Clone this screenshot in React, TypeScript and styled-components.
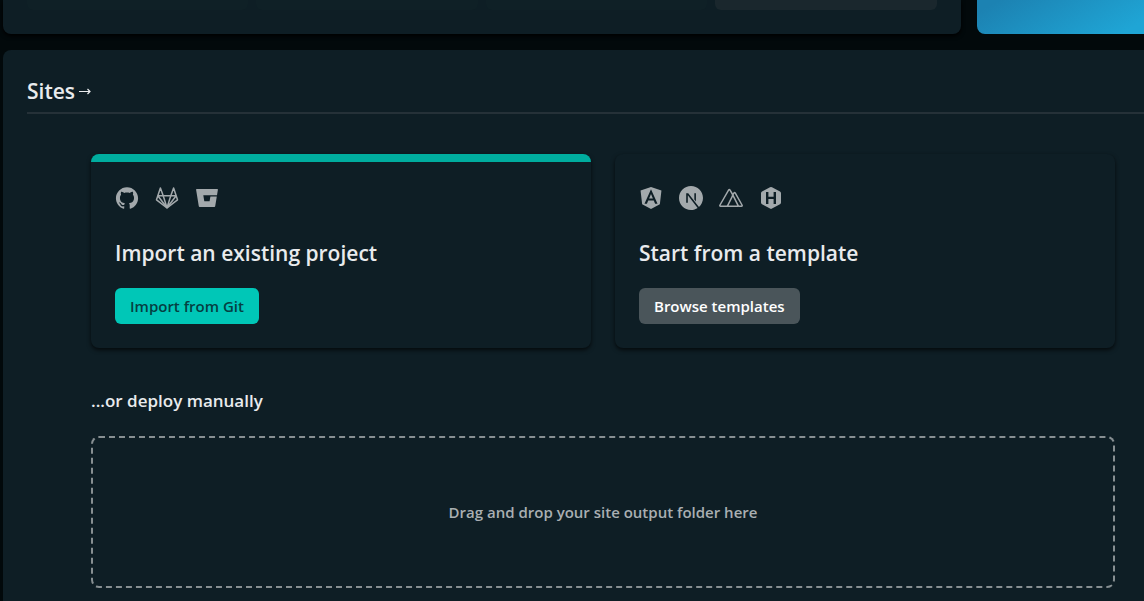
import React from "react";
import styled, { createGlobalStyle } from "styled-components";
import { SiGithub, SiNextdotjs } from "react-icons/si";

const GlobalStyle = createGlobalStyle`
  * { box-sizing: border-box; }
  body {
    margin: 0;
    background: #02090b;
    color: #e9ebed;
    font-family: "Open Sans", "Noto Sans", sans-serif;
    font-size: 15px;
    line-height: 24px;
  }
  h2, h3, h4, p { margin: 0; }
  button { font: inherit; cursor: pointer; }
`;

const Page = styled.main`
  display: flex;
  flex-direction: column;
  gap: 16px;
  padding-left: 3px;
  overflow: hidden;
`;

const TopRow = styled.div`
  display: flex;
  gap: 16px;
`;

const UsagePanel = styled.section`
  flex: 1;
  display: grid;
  grid-template-columns: repeat(3, 1fr) 222px;
  gap: 8px;
  padding: 0 24px 24px;
  border-radius: 0 0 8px 8px;
  background: #0e1e25;
  box-shadow: 0 2px 4px #000000;
`;

const Usage = styled.div<{ $strong?: boolean }>`
  height: 10px;
  border-radius: 0 0 6px 6px;
  background: ${(p) => (p.$strong ? "#1a272d" : "#0f2026")};
`;

const Promo = styled.aside`
  flex: 0 0 167px;
  border-radius: 0 0 0 8px;
  background: linear-gradient(150deg, #1c82b2 10%, #1fa5d5 90%);
`;

const Panel = styled.section`
  padding: 25px 0 13px 24px;
  border-radius: 8px 0 0 0;
  background: #0e1e25;
`;

const PanelHeader = styled.header`
  padding: 0 0 5px;
  border-bottom: 2px solid #253138;
`;

const Title = styled.h2`
  font-size: 21px;
  line-height: 32px;
  font-weight: 600;
`;

const TitleLink = styled.a`
  display: inline-flex;
  align-items: center;
  gap: 4px;
  color: inherit;
  text-decoration: none;
`;

const Content = styled.div`
  max-width: 1024px;
  margin: 40px 29px 0 64px;
`;

const Cards = styled.div`
  display: grid;
  grid-template-columns: 1fr 1fr;
  gap: 24px;
`;

const Card = styled.article<{ $accent?: boolean }>`
  padding: 24px;
  border-top: 8px solid ${(p) => (p.$accent ? "#00ad9f" : "transparent")};
  border-radius: 8px;
  background-color: #0e1e25;
  box-shadow: 0 2px 4px rgba(0, 0, 0, 0.7);
`;

const Logos = styled.div`
  display: flex;
  gap: 16px;
  height: 24px;
  color: #a3a9ac;
`;

const CardTitle = styled.h3`
  margin: 27px 0 19px;
  font-size: 21px;
  line-height: 32px;
  font-weight: 600;
`;

const Button = styled.button<{ $primary?: boolean }>`
  height: 36px;
  padding: 0 15px;
  border: 0;
  border-radius: 6px;
  font-weight: 600;
  background: ${(p) => (p.$primary ? "#00c7b7" : "#4a555a")};
  color: ${(p) => (p.$primary ? "#053f42" : "#ffffff")};
`;

const ManualTitle = styled.h4`
  margin: 41px 0 23px;
  font-size: 17px;
  line-height: 24px;
  font-weight: 600;
`;

const DropZone = styled.div`
  display: flex;
  align-items: center;
  justify-content: center;
  height: 152px;
  border: 2px dashed #878f92;
  border-radius: 8px;
  color: #a9afb2;
  font-weight: 600;
`;

const GitLabLogo = () => (
  <svg width="24" height="24" viewBox="0 0 24 24" fill="none" stroke="currentColor" strokeWidth="1.5" strokeLinejoin="round">
    <path d="M5.4 2L1.5 13.8L12 21.8L22.5 13.8L18.6 2L15.8 9.8H8.2Z" />
    <path d="M2.8 9.8H8.2L12 21.8L15.8 9.8H21.2M2.8 9.8L12 21.8L21.2 9.8" />
  </svg>
);

const BitbucketLogo = () => (
  <svg width="24" height="24" viewBox="0 0 24 24" fill="currentColor">
    <path d="M1.6 3H22.4Q23 3 22.9 3.7L22 9.2H8.3L9.3 15.2H14.6L15.4 10.4H21.8L20.2 20.3Q20 21 19.4 21H4.6Q4 21 3.8 20.3L1.1 3.7Q1 3 1.6 3Z" />
  </svg>
);

const AngularLogo = () => (
  <svg width="24" height="24" viewBox="-1 -1 26 26" fill="currentColor">
    <path d="M9.931 12.645h4.138l-2.07-4.908m0-7.737L.68 3.982l1.726 14.771L12 24l9.596-5.242L23.32 3.984 11.999.001zm7.064 18.31h-2.638l-1.422-3.503H8.996l-1.422 3.504h-2.64L12 2.65z" />
  </svg>
);

const NuxtLogo = () => (
  <svg width="24" height="24" viewBox="0 0 24 24" fill="none" stroke="currentColor" strokeWidth="1.5" strokeLinejoin="round">
    <path d="M8.4 20.2H1.6Q.4 20.2 1 19L9.7 3.9Q10.3 3 10.9 3.9L13.9 9" />
    <path d="M8.4 20.2L13.9 9.2L19.4 20.2Z" />
    <path d="M13.2 9.6L15 6.9Q15.6 6.2 16.2 6.9L23 19Q23.6 20.2 22.4 20.2H19.4" />
  </svg>
);

const HugoLogo = () => (
  <svg width="24" height="24" viewBox="0 0 24 24" fill="currentColor" fillRule="evenodd">
    <path d="M11 1.2Q12 .6 13 1.2L21 5.6Q22 6.2 22 7.3V16.5Q22 17.6 21 18.2L13 22.6Q12 23.2 11 22.6L3 18.2Q2 17.6 2 16.5V7.3Q2 6.2 3 5.6ZM7 6V18H9.4V13.1H14.6V18H17V6H14.6V10.8H9.4V6Z" />
  </svg>
);

export default function App() {
  return (
    <>
      <GlobalStyle />
      <Page>
        <TopRow>
          <UsagePanel>
            <Usage />
            <Usage />
            <Usage />
            <Usage $strong />
          </UsagePanel>
          <Promo />
        </TopRow>
        <Panel>
          <PanelHeader>
            <Title>
              <TitleLink href="#sites">
                Sites
                <svg width="12" height="8" viewBox="0 0 12 8" fill="none" stroke="currentColor" strokeWidth="1.2">
                  <path d="M0 4.5H11M8.5 2L11 4.5L8.5 7" />
                </svg>
              </TitleLink>
            </Title>
          </PanelHeader>
          <Content>
            <Cards>
              <Card $accent>
                <Logos>
                  <SiGithub size={24} viewBox="-1 -1 26 26" />
                  <GitLabLogo />
                  <BitbucketLogo />
                </Logos>
                <CardTitle>Import an existing project</CardTitle>
                <Button $primary type="button">Import from Git</Button>
              </Card>
              <Card>
                <Logos>
                  <AngularLogo />
                  <SiNextdotjs size={24} />
                  <NuxtLogo />
                  <HugoLogo />
                </Logos>
                <CardTitle>Start from a template</CardTitle>
                <Button type="button">Browse templates</Button>
              </Card>
            </Cards>
            <ManualTitle>...or deploy manually</ManualTitle>
            <DropZone>Drag and drop your site output folder here</DropZone>
          </Content>
        </Panel>
      </Page>
    </>
  );
}
